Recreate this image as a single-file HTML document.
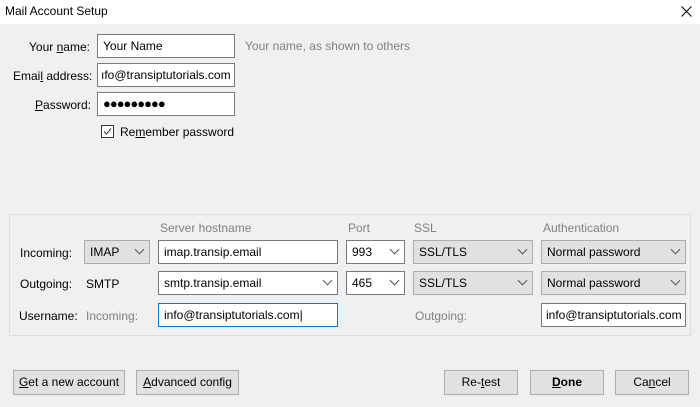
<!DOCTYPE html>
<html><head><style>
*{box-sizing:border-box;margin:0;padding:0}
body{width:700px;height:407px;background:#f0f0f0;font-family:"Liberation Sans",sans-serif;font-size:12px;color:#000;position:relative;overflow:hidden}
.a{position:absolute;white-space:nowrap}
.title{position:absolute;left:0;top:0;width:700px;height:24px;background:#fff}
.in{position:absolute;background:#fff;border:1px solid #7a7a7a;height:24px;padding:0 5px;line-height:22px;overflow:hidden;white-space:nowrap}
.sel{position:absolute;background:#e1e1e1;border:1px solid #adadad;height:24px;padding:0 5px;line-height:22px;white-space:nowrap}
.dd{position:absolute;right:6px;top:8px;width:7px;height:7px;border-right:1px solid #555;border-bottom:1px solid #555;transform:rotate(45deg);top:5px}
.btn{position:absolute;background:#e1e1e1;border:1px solid #adadad;height:25px;line-height:23px;text-align:center}
.g{color:#808080}
u{text-decoration:underline}
</style></head><body>
<div class="title"></div>
<div class="a" style="left:5px;top:4px">Mail Account Setup</div>
<svg class="a" style="left:681px;top:6px" width="11" height="11"><path d="M0.5 0.5L10.5 10.5M10.5 0.5L0.5 10.5" stroke="#000" stroke-width="1"/></svg>

<div class="a" style="left:29px;top:40px">Your <u>n</u>ame:</div>
<div class="in" style="left:97px;top:34px;width:138px">Your Name</div>
<div class="a g" style="left:245px;top:39px">Your name, as shown to others</div>
<div class="a" style="left:13px;top:69px">Emai<u>l</u> address:</div>
<div class="in" style="left:97px;top:63px;width:138px;padding-left:3px">ıfo@transiptutorials.com</div>
<div class="a" style="left:35px;top:98px"><u>P</u>assword:</div>
<div class="in" style="left:97px;top:92px;width:138px;font-size:13px;letter-spacing:-1px">●●●●●●●●●</div>
<div class="a" style="left:101px;top:125px;width:13px;height:13px;border:1px solid #333;background:#fff"></div>
<svg class="a" style="left:102px;top:126px" width="11" height="11"><path d="M2 5.5L4.5 8L9 2.5" stroke="#333" fill="none"/></svg>
<div class="a" style="left:120px;top:125px">Re<u>m</u>ember password</div>

<div class="a" style="left:9px;top:214px;width:682px;height:122px;border:1px solid #dcdcdc"></div>
<div class="a g" style="left:160px;top:221px">Server hostname</div>
<div class="a g" style="left:348px;top:221px">Port</div>
<div class="a g" style="left:414px;top:221px">SSL</div>
<div class="a g" style="left:543px;top:221px">Authentication</div>

<div class="a" style="left:20px;top:246px">Incoming:</div>
<div class="sel" style="left:84px;top:240px;width:66px">IMAP<span class="dd"></span></div>
<div class="in" style="left:158px;top:240px;width:180px">imap.transip.email</div>
<div class="in" style="left:346px;top:240px;width:59px">993<span class="dd"></span></div>
<div class="sel" style="left:413px;top:240px;width:120px">SSL/TLS<span class="dd"></span></div>
<div class="sel" style="left:541px;top:240px;width:145px">Normal password<span class="dd"></span></div>

<div class="a" style="left:20px;top:277px">Outgoing:</div>
<div class="a" style="left:86px;top:277px">SMTP</div>
<div class="in" style="left:158px;top:271px;width:180px">smtp.transip.email<span class="dd"></span></div>
<div class="in" style="left:346px;top:271px;width:59px">465<span class="dd"></span></div>
<div class="sel" style="left:413px;top:271px;width:120px">SSL/TLS<span class="dd"></span></div>
<div class="sel" style="left:541px;top:271px;width:145px">Normal password<span class="dd"></span></div>

<div class="a" style="left:19px;top:309px">Username:</div>
<div class="a g" style="left:86px;top:309px">Incoming:</div>
<div class="in" style="left:158px;top:303px;width:180px;border-color:#0078d7">info@transiptutorials.com|</div>
<div class="a g" style="left:415px;top:309px">Outgoing:</div>
<div class="in" style="left:541px;top:303px;width:145px;padding-left:4px">info@transiptutorials.com</div>

<div class="btn" style="left:13px;top:370px;width:112px"><u>G</u>et a new account</div>
<div class="btn" style="left:136px;top:370px;width:103px"><u>A</u>dvanced config</div>
<div class="btn" style="left:444px;top:370px;width:74px">Re-<u>t</u>est</div>
<div class="btn" style="left:530px;top:370px;width:74px;font-weight:bold"><u>D</u>one</div>
<div class="btn" style="left:615px;top:370px;width:74px">Ca<u>n</u>cel</div>
</body></html>
